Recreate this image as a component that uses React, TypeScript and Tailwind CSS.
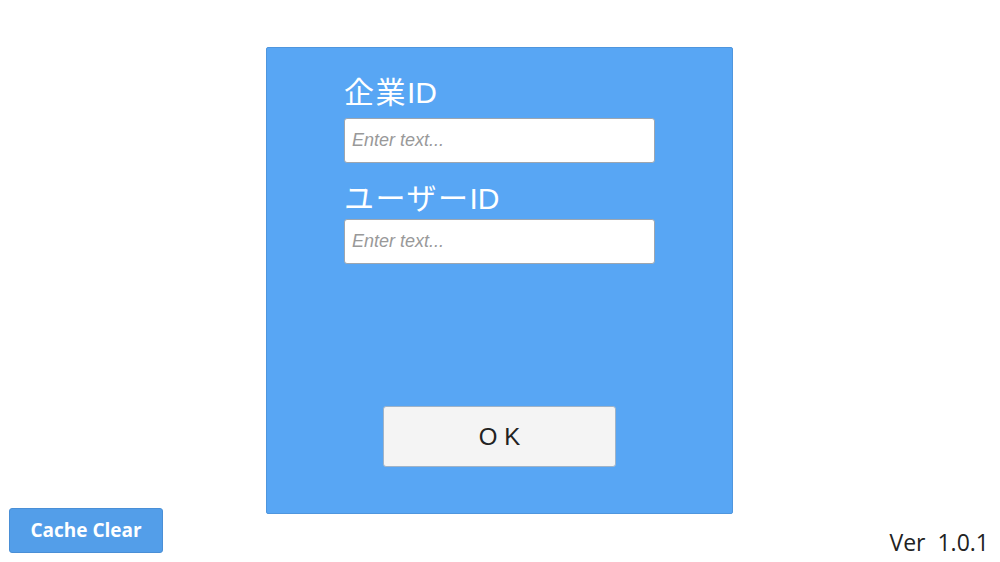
import React from "react";

const labelFont = { fontFamily: '"Liberation Sans", "Noto Sans CJK JP", sans-serif' };

export default function App() {
  return (
    <div className="flex h-[562px] w-[1000px] bg-white">
      <div className="flex w-[266px] flex-col justify-end pb-[9px] pl-[9px]">
        <button
          className="flex h-[45px] w-[154px] items-center justify-center rounded-[3px] border border-[#4a8fd6] bg-[#539ee9] pb-[1px] text-[19px] font-bold text-white"
          style={{ fontFamily: '"Open Sans", sans-serif' }}
        >
          Cache Clear
        </button>
      </div>
      <div className="pt-[47px]">
        <div className="flex h-[467px] w-[467px] flex-col rounded-[2px] border border-[#4f96de] bg-[#58a6f4] pl-[77px] pt-[27px]">
          <div className="h-[36px] text-[30px] leading-[36px] text-white" style={labelFont}>
            <span className="tracking-[1.5px]">企業</span>ID
          </div>
          <div className="mt-[7px] flex h-[45px] w-[311px] items-center rounded-[3px] border border-[#9da6b0] bg-white pl-[7px]">
            <span
              className="text-[18px] italic text-[#999999]"
              style={{ fontFamily: '"Liberation Sans", sans-serif' }}
            >
              Enter text...
            </span>
          </div>
          <div className="mt-[18px] h-[36px] text-[30px] leading-[36px] text-white" style={labelFont}>
            <span className="tracking-[1.5px]">ユーザー</span>ID
          </div>
          <div className="mt-[2px] flex h-[45px] w-[311px] items-center rounded-[3px] border border-[#9da6b0] bg-white pl-[7px]">
            <span
              className="text-[18px] italic text-[#999999]"
              style={{ fontFamily: '"Liberation Sans", sans-serif' }}
            >
              Enter text...
            </span>
          </div>
          <div className="ml-[39px] mt-[142px] flex h-[61px] w-[233px] items-center justify-center rounded-[3px] border border-[#9fb3c8] bg-[#f4f4f4]">
            <span
              className="text-[24px] text-[#222222]"
              style={{ fontFamily: '"Liberation Sans", sans-serif' }}
            >
              O K
            </span>
          </div>
        </div>
      </div>
      <div className="flex flex-1 flex-col items-end justify-end pb-[3px] pr-[11px]">
        <span
          className="whitespace-pre text-[23px] text-[#222222]"
          style={{ fontFamily: '"Open Sans", sans-serif' }}
        >
          Ver  1.0.1
        </span>
      </div>
    </div>
  );
}
